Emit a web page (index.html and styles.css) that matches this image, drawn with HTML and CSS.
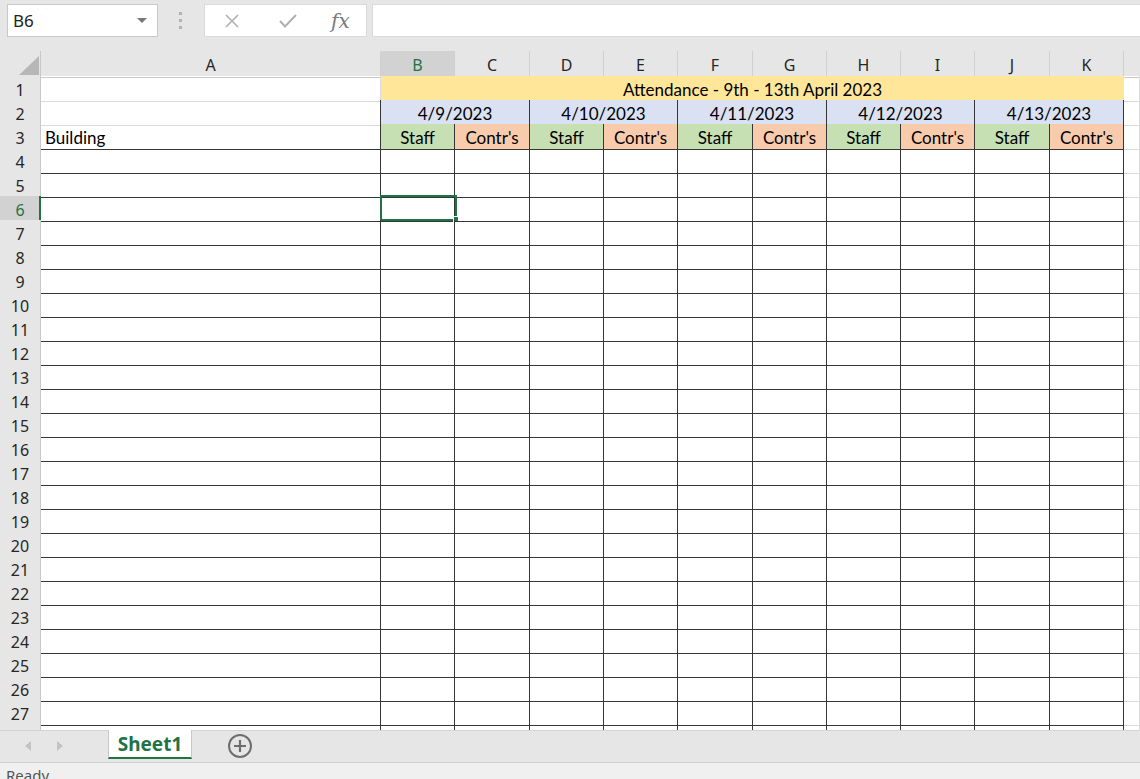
FILE: index.html
```html
<!DOCTYPE html>
<html lang="en">
<head>
  <meta charset="UTF-8" />
  <title>Book1 - Excel</title>
  <link rel="stylesheet" href="styles.css">
</head>
<body>
  <div class="formula-bar">
    <div class="name-box">
      <span class="name-box-text">B6</span>
      <svg class="name-box-caret" width="10" height="6" viewBox="0 0 10 6"><path d="M0 0 L10 0 L5 5 Z" fill="#777"/></svg>
    </div>
    <div class="bar-grip">
      <svg width="4" height="18" viewBox="0 0 4 18"><rect x="0" y="0" width="3" height="3" fill="#b3b3b3"/><rect x="0" y="7" width="3" height="3" fill="#b3b3b3"/><rect x="0" y="14" width="3" height="3" fill="#b3b3b3"/></svg>
    </div>
    <div class="fx-box">
      <svg class="fx-icon" width="16" height="16" viewBox="0 0 16 16"><path d="M2 2 L14 14 M14 2 L2 14" stroke="#b0b0b0" stroke-width="1.6" fill="none"/></svg>
      <svg class="fx-icon" width="20" height="16" viewBox="0 0 20 16"><path d="M2 8 L7 13.5 L18 2" stroke="#b0b0b0" stroke-width="2" fill="none"/></svg>
      <span class="fx-label">fx</span>
    </div>
    <div class="formula-input"></div>
  </div>

  <div class="sheet" id="sheet">
    <div class="row header-row">
      <div class="corner"><svg width="20" height="19" viewBox="0 0 20 19"><path d="M0 19 L20 19 L20 0 Z" fill="#b7b7b7"/></svg></div>
      <div class="col-head">A</div>
      <div class="col-head active">B</div>
      <div class="col-head">C</div>
      <div class="col-head">D</div>
      <div class="col-head">E</div>
      <div class="col-head">F</div>
      <div class="col-head">G</div>
      <div class="col-head">H</div>
      <div class="col-head">I</div>
      <div class="col-head">J</div>
      <div class="col-head">K</div>
      <div class="col-head last"></div>
    </div>

    <div class="row">
      <div class="row-head">1</div>
      <div class="cell light"></div>
      <div class="cell title span-10">Attendance - 9th - 13th April 2023</div>
      <div class="cell light"></div>
    </div>

    <div class="row">
      <div class="row-head">2</div>
      <div class="cell light edge"></div>
      <div class="cell date span-2">4/9/2023</div>
      <div class="cell date span-2">4/10/2023</div>
      <div class="cell date span-2">4/11/2023</div>
      <div class="cell date span-2">4/12/2023</div>
      <div class="cell date span-2">4/13/2023</div>
      <div class="cell light"></div>
    </div>

    <div class="row">
      <div class="row-head">3</div>
      <div class="cell left">Building</div>
      <div class="cell staff">Staff</div>
      <div class="cell contr">Contr's</div>
      <div class="cell staff">Staff</div>
      <div class="cell contr">Contr's</div>
      <div class="cell staff">Staff</div>
      <div class="cell contr">Contr's</div>
      <div class="cell staff">Staff</div>
      <div class="cell contr">Contr's</div>
      <div class="cell staff">Staff</div>
      <div class="cell contr">Contr's</div>
      <div class="cell light"></div>
    </div>
  </div>

  <div class="tab-bar">
    <div class="tab-nav">
      <svg width="6" height="10" viewBox="0 0 6 10"><path d="M6 0 L0 5 L6 10 Z" fill="#c3c3c3"/></svg>
      <svg width="6" height="10" viewBox="0 0 6 10"><path d="M0 0 L6 5 L0 10 Z" fill="#c3c3c3"/></svg>
    </div>
    <div class="sheet-tab">Sheet1</div>
    <div class="add-sheet">
      <svg width="26" height="26" viewBox="0 0 26 26"><circle cx="13" cy="13" r="11" stroke="#6e6e6e" stroke-width="2" fill="none"/><path d="M13 7 V19 M7 13 H19" stroke="#6e6e6e" stroke-width="2.2"/></svg>
    </div>
  </div>

  <div class="status-bar">Ready</div>

  <script>
    // Empty bordered rows 4..28
    const sheet = document.getElementById('sheet');
    for (let r = 4; r <= 28; r++) {
      const row = document.createElement('div');
      row.className = 'row';
      let html = `<div class="row-head${r === 6 ? ' active' : ''}">${r}</div>`;
      html += '<div class="cell left"></div>';
      for (let c = 0; c < 10; c++) {
        if (r === 6 && c === 0) {
          html += '<div class="cell selected"><div class="selection"></div><div class="fill-handle"></div></div>';
        } else {
          html += '<div class="cell"></div>';
        }
      }
      html += '<div class="cell light"></div>';
      row.innerHTML = html;
      sheet.appendChild(row);
    }
  </script>
</body>
</html>
```

FILE: styles.css
```css
* {
  margin: 0;
  padding: 0;
  box-sizing: border-box;
}

body {
  width: 1140px;
  height: 779px;
  overflow: hidden;
  background: #e6e6e6;
  font-family: 'Noto Sans', 'Open Sans', sans-serif;
  color: #262626;
}

/* Formula bar */
.formula-bar {
  height: 51px;
  display: flex;
  align-items: flex-start;
  padding: 4px 0 0 7px;
}

.name-box {
  width: 151px;
  height: 33px;
  background: #ffffff;
  border: 1px solid #c8c8c8;
  display: flex;
  align-items: center;
  justify-content: space-between;
  padding: 0 10px 0 5px;
  font-size: 17px;
  color: #222;
}

.bar-grip {
  width: 46px;
  height: 33px;
  display: flex;
  align-items: center;
  justify-content: center;
}

.fx-box {
  width: 163px;
  height: 33px;
  background: #ffffff;
  border: 1px solid #dadada;
  display: flex;
  align-items: center;
  padding-left: 19px;
  gap: 38px;
}

.fx-label {
  font-family: 'DejaVu Serif', 'Liberation Serif', serif;
  font-style: italic;
  font-size: 20px;
  color: #7a7a7a;
  margin-left: -5px;
}

.formula-input {
  flex: 1;
  height: 33px;
  margin-left: 5px;
  background: #ffffff;
  border: 1px solid #dadada;
  border-right: none;
}

/* Grid */
.sheet {
  height: 679px;
  overflow: hidden;
  background: #ffffff;
}

.row {
  display: grid;
  grid-template-columns: 41px 340px 74px 75px 74px 74px 75px 74px 74px 74px 75px 74px 1fr;
  height: 24px;
}

.header-row {
  height: 25px;
  background: #e6e6e6;
}

.corner {
  display: flex;
  align-items: flex-end;
  justify-content: flex-end;
  padding: 0 1px 2px 0;
  border-right: 1px solid #c8c8c8;
  border-bottom: 1px solid #c8c8c8;
}

.col-head {
  font-size: 16px;
  display: flex;
  align-items: center;
  justify-content: center;
  border-right: 1px solid #d0d0d0;
  border-bottom: 1px solid #c8c8c8;
  padding-top: 2px;
}

.col-head.active {
  background: #d2d2d2;
  color: #217346;
  border-bottom: 2px solid #217346;
  padding-top: 3px;
}

.col-head.last {
  border-right: none;
}

.row-head {
  background: #e6e6e6;
  font-size: 16px;
  display: flex;
  align-items: center;
  justify-content: center;
  padding-top: 3px;
  border-right: 1px solid #c8c8c8;
  border-bottom: 1px solid #d2d2d2;
}

.row-head.active {
  background: #d2d2d2;
  color: #217346;
  border-right: 2px solid #217346;
  padding-left: 1px;
}

.cell {
  font-family: Lato, 'Liberation Sans', sans-serif;
  font-size: 17px;
  color: #000;
  padding-top: 3px;
  line-height: 22px;
  text-align: center;
  white-space: nowrap;
  border-right: 1px solid #363636;
  border-bottom: 1px solid #363636;
  position: relative;
}

.cell.light {
  border-right: 1px solid #dadada;
  border-bottom: 1px solid #dadada;
}

.cell.light.edge {
  border-right: 1px solid #363636;
}

.cell.left {
  text-align: left;
  padding-left: 4px;
}

.span-2 {
  grid-column: span 2;
}

.span-10 {
  grid-column: span 10;
}

.title {
  background: #ffe699;
  border-right: none;
}

.date {
  background: #d9e1f2;
}

.staff {
  background: #c6e0b4;
}

.contr {
  background: #f8cbad;
}

.selection {
  position: absolute;
  left: -1px;
  top: -1px;
  width: 77px;
  height: 26px;
  border: 2px solid #217346;
}

.fill-handle {
  position: absolute;
  left: 72px;
  top: 20px;
  width: 6px;
  height: 6px;
  background: #217346;
  border: 1px solid #ffffff;
}

/* Sheet tabs */
.tab-bar {
  height: 32px;
  background: #e6e6e6;
  display: flex;
  align-items: flex-start;
  border-top: 1px solid #d4d4d4;
}

.tab-nav {
  width: 108px;
  height: 30px;
  display: flex;
  align-items: center;
  gap: 26px;
  padding-left: 25px;
}

.sheet-tab {
  width: 84px;
  height: 29px;
  background: #ffffff;
  border-left: 1px solid #c8c8c8;
  border-right: 1px solid #c8c8c8;
  border-bottom: 2px solid #217346;
  margin-top: -1px;
  color: #217346;
  font-weight: 700;
  font-size: 19px;
  display: flex;
  align-items: center;
  justify-content: center;
}

.add-sheet {
  margin-left: 35px;
  height: 30px;
  display: flex;
  align-items: center;
}

.status-bar {
  height: 17px;
  background: #f0f0f0;
  border-top: 1px solid #d0d0d0;
  font-size: 15px;
  color: #555;
  padding: 4px 0 0 6px;
  line-height: 16px;
}
```
